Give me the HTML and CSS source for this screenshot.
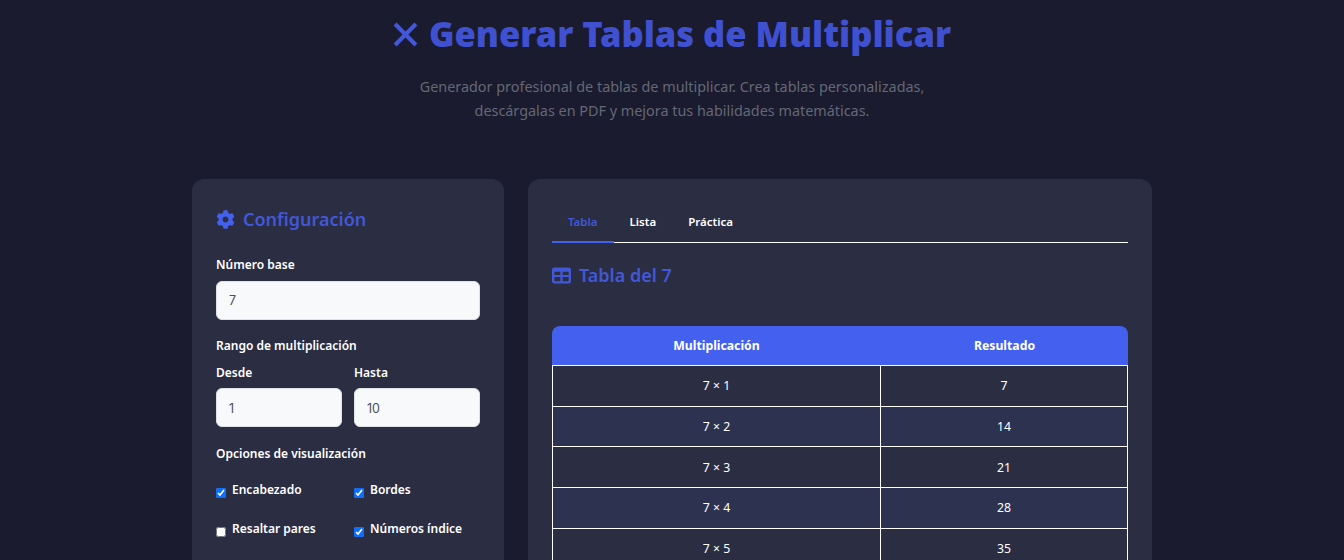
FILE: index.html
```html
<!DOCTYPE html>
<html lang="es">
<head>
<meta charset="utf-8">
<title>Generar Tablas de Multiplicar</title>
<link rel="stylesheet" href="styles.css">
</head>
<body>
<header class="hero">
  <h1 class="hero-title">
    <svg class="hero-icon" viewBox="0 0 24 24" aria-hidden="true"><path d="M2 2 22 22M22 2 2 22"/></svg>
    <span>Generar Tablas de Multiplicar</span>
  </h1>
  <p class="hero-sub">Generador profesional de tablas de multiplicar. Crea tablas personalizadas,<br>descárgalas en PDF y mejora tus habilidades matemáticas.</p>
</header>
<main class="layout">
  <aside class="card config">
    <h2 class="card-title">
      <svg class="gear" viewBox="0 0 512 512" aria-hidden="true"><path d="M487 316l-42-25c4-23 4-47 0-70l42-25c5-3 7-9 5-14-11-35-30-67-54-93-4-4-10-5-15-2l-42 24c-18-15-38-27-60-35V28c0-6-4-11-9-12-37-8-74-8-109 0-5 1-9 6-9 12v48c-22 8-42 20-60 35L92 87c-5-3-11-2-15 2-24 26-43 58-54 93-2 5 0 11 5 14l42 25c-4 23-4 47 0 70l-42 25c-5 3-7 9-5 14 11 35 30 67 54 93 4 4 10 5 15 2l42-24c18 15 38 27 60 35v48c0 6 4 11 9 12 37 8 74 8 109 0 5-1 9-6 9-12v-48c22-8 42-20 60-35l42 24c5 3 11 2 15-2 24-26 43-58 54-93 2-5 0-11-5-14zM256 336c-44 0-80-36-80-80s36-80 80-80 80 36 80 80-36 80-80 80z"/></svg>
      <span>Configuración</span>
    </h2>
    <div class="field">
      <label class="label" for="base">Número base</label>
      <input class="input" id="base" type="text" value="7">
    </div>
    <div class="field range-field">
      <div class="label range-label">Rango de multiplicación</div>
      <div class="two-col">
        <div>
          <label class="label sub-label" for="desde">Desde</label>
          <input class="input input-tall" id="desde" type="text" value="1">
        </div>
        <div>
          <label class="label sub-label" for="hasta">Hasta</label>
          <input class="input input-tall" id="hasta" type="text" value="10">
        </div>
      </div>
    </div>
    <div class="field">
      <div class="label options-label">Opciones de visualización</div>
      <div class="checks">
        <label class="check"><input type="checkbox" checked><span>Encabezado</span></label>
        <label class="check"><input type="checkbox" checked><span>Bordes</span></label>
        <label class="check"><input type="checkbox"><span>Resaltar pares</span></label>
        <label class="check"><input type="checkbox" checked><span>Números índice</span></label>
      </div>
    </div>
  </aside>
  <section class="card result">
    <nav class="tabs">
      <a class="tab active">Tabla</a>
      <a class="tab">Lista</a>
      <a class="tab">Práctica</a>
    </nav>
    <h2 class="card-title result-title">
      <svg class="table-icon" viewBox="0 0 20 17" aria-hidden="true"><path fill-rule="evenodd" d="M2.500 0h15A2.500 2.500 0 0 1 20 2.500v12a2.500 2.500 0 0 1-2.500 2.500h-15A2.500 2.500 0 0 1 0 14.500v-12A2.500 2.500 0 0 1 2.500 0zM2.500 4.500v3.500h6.300V4.500zm8.700 0v3.500h6.300V4.500zM2.500 10v4.500h6.300V10zm8.700 0v4.500h6.300V10z"/></svg>
      <span>Tabla del 7</span>
    </h2>
    <table class="mult">
      <thead><tr><th>Multiplicación</th><th>Resultado</th></tr></thead>
      <tbody>
        <tr><td>7 × 1</td><td>7</td></tr>
        <tr><td>7 × 2</td><td>14</td></tr>
        <tr><td>7 × 3</td><td>21</td></tr>
        <tr><td>7 × 4</td><td>28</td></tr>
        <tr><td>7 × 5</td><td>35</td></tr>
      </tbody>
    </table>
  </section>
</main>
</body>
</html>
```
FILE: styles.css
```css
* { box-sizing: border-box; }
html, body { height: 560px; overflow: hidden; }
body {
  margin: 0;
  background: #1a1b2e;
  color: #fff;
  font-family: "Noto Sans", "Open Sans", sans-serif;
}
.hero { text-align: center; padding-top: 9px; height: 179px; }
.hero-title {
  margin: 0;
  display: flex;
  justify-content: center;
  align-items: center;
  gap: 11px;
  font-size: 34.500px;
  line-height: 50px;
  font-weight: 900;
  color: #3f50d0;
}
.hero-icon { width: 25px; height: 25px; fill: none; stroke: #4357de; stroke-width: 4; }
.hero-sub {
  margin: 16px 0 0;
  font-size: 14.400px;
  line-height: 24px;
  color: #646875;
}
.layout {
  width: 960px;
  margin: 0 auto;
  display: grid;
  grid-template-columns: 312px 624px;
  gap: 24px;
  align-items: start;
}
.card { background: #2b2d42; border-radius: 12px; padding: 24px; height: 600px; }
.card-title {
  margin: 0;
  display: flex;
  align-items: center;
  gap: 8px;
  font-size: 18px;
  line-height: 32px;
  font-weight: 600;
  color: #4158d8;
}
.gear { width: 19px; height: 19px; fill: #4361ee; }
.config .card-title { margin-bottom: 21px; }
.field { margin-bottom: 17px; }
.label { display: block; font-size: 12px; line-height: 18px; font-weight: 600; margin-bottom: 7px; color: #fff; }
.range-field { margin-bottom: 18px; }
.range-label { margin-bottom: 9px; }
.sub-label { margin-bottom: 6px; }
.input {
  display: block;
  width: 100%;
  height: 38.500px;
  padding: 0 12px;
  border: 1px solid #dee2e6;
  border-radius: 6px;
  background: #f8f9fa;
  color: #495057;
  font: 400 12.500px "Inter", sans-serif;
}
.input-tall { height: 39.500px; padding-top: 2px; }
.two-col { display: grid; grid-template-columns: 126px 126px; gap: 12px; }
.options-label { margin-bottom: 18px; }
.checks { display: grid; grid-template-columns: 126px 126px; column-gap: 12px; row-gap: 21px; }
.check { display: flex; align-items: flex-start; gap: 6px; font-size: 12px; line-height: 18px; font-weight: 600; }
.check input { width: 10px; height: 10px; margin: 7px 0 0 0; accent-color: #0d6efd; flex: none; }
.tabs { display: flex; border-bottom: 1px solid #fff; height: 40px; }
.tab { padding: 0 16px; font-size: 11.500px; line-height: 37px; font-weight: 600; height: 40px; color: #fff; }
.tab.active { color: #4158d8; border-bottom: 2px solid #4361ee; }
.result-title { margin-top: 16px; margin-bottom: 35px; }
.table-icon { width: 19px; height: 17px; fill: #4158d8; }
.mult { width: 100%; border-collapse: separate; border-spacing: 0; font-size: 12.250px; table-layout: fixed; }
.mult th:first-child { width: 329px; }
.mult th {
  background: #4361ee;
  height: 39px;
  font-weight: 700;
  color: #fff;
}
.mult th:first-child { border-top-left-radius: 8px; }
.mult th:last-child { border-top-right-radius: 8px; }
.mult td {
  height: 40.700px;
  text-align: center;
  border-right: 1px solid #fff;
  border-bottom: 1px solid #fff;
}
.mult td:first-child { border-left: 1px solid #fff; }
.mult tbody tr:first-child td { border-top: 1px solid #fff; height: 41.500px; }
.mult tbody tr:nth-child(even) td { background: #2d3250; }
```
